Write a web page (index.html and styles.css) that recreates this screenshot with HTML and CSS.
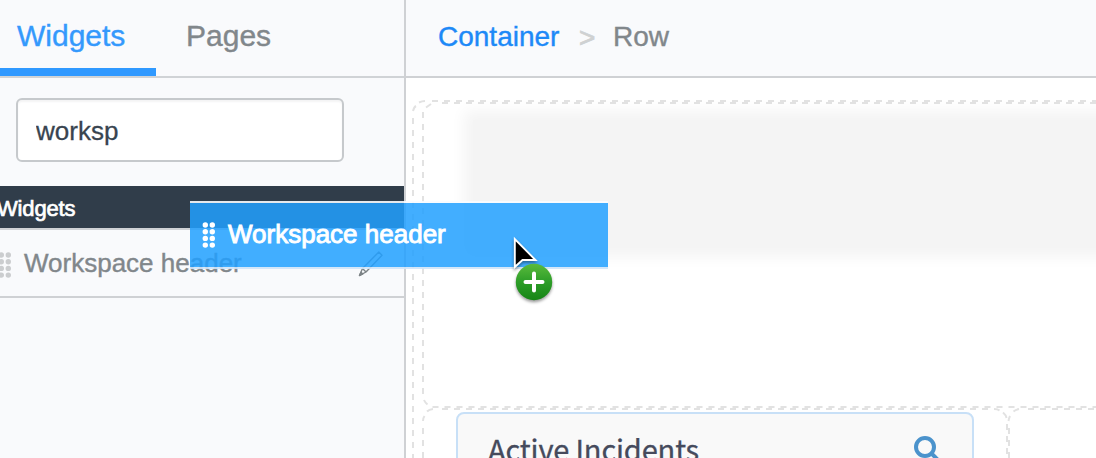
FILE: index.html
```html
<!DOCTYPE html>
<html lang="en">
<head>
<meta charset="utf-8">
<title>Page designer</title>
<link rel="stylesheet" href="styles.css">
</head>
<body>
<div class="app">
  <aside class="sidebar">
    <nav class="tabs">
      <a class="tab tab-active">Widgets</a>
      <a class="tab">Pages</a>
    </nav>
    <div class="search"><input class="search-input" type="text" value="worksp"></div>
    <h2 class="group-title">Widgets</h2>
    <div class="widget-item">
      <svg class="grip" width="14" height="26" viewBox="0 0 14 26"><g fill="currentColor"><circle cx="3.3" cy="3" r="2.7"/><circle cx="10.3" cy="3" r="2.7"/><circle cx="3.3" cy="9.7" r="2.7"/><circle cx="10.3" cy="9.7" r="2.7"/><circle cx="3.3" cy="16.4" r="2.7"/><circle cx="10.3" cy="16.4" r="2.7"/><circle cx="3.3" cy="23.1" r="2.7"/><circle cx="10.3" cy="23.1" r="2.7"/></g></svg>
      <span class="widget-name">Workspace header</span>
      <svg class="pencil" width="26" height="26" viewBox="0 0 26 26" fill="none" stroke="#7d8386" stroke-width="1.4" stroke-linejoin="round"><path d="M1.500 24.500 4.500 17.500 20.800 1 24 4.200 8 21Z"/><path d="M4.500 17.500 8 21"/><path d="M1.500 24.500 3 21.200 4.900 22.900Z" fill="#7d8386"/></svg>
    </div>
  </aside>
  <main class="stage">
    <header class="crumbs">
      <a class="crumb-link">Container</a><span class="crumb-sep">&gt;</span><span class="crumb">Row</span>
    </header>
    <section class="canvas">
      <svg class="outlines" width="690" height="380" viewBox="406 78 690 380" fill="none" stroke="#e2e2e2" stroke-width="2" stroke-dasharray="6 6">
        <path d="M432 101H1096"/><path d="M413 118V458"/><path d="M413 111Q414 107 416 106M419 102.5Q422 101 425 101" stroke-dasharray="none"/>
        <path d="M442 103H1096"/><path d="M423 112V396"/><path d="M426 107.5 431 104M424 400Q425 402.500 427.500 404.500" stroke-dasharray="none"/>
        <path d="M432.500 407H1096"/>
        <path d="M442 409H994"/><path d="M427 411.500Q429 409.500 433 409M423 421Q423 418 424.500 416" stroke-dasharray="none"/>
        <path d="M423 428V458M1007 424V458M1009 428V458"/>
        <path d="M994 409Q998 409 999.500 410.500M1003 412.500Q1006 415 1006.500 418M1008.500 421Q1009 418 1010 416M1013.500 411.500Q1016 409.500 1019 409" stroke-dasharray="none"/>
        <path d="M1028 409H1096"/>
      </svg>
      <div class="drop-row"><div class="drop-target"></div></div>
      <div class="card">
        <h3 class="card-title">Active Incidents</h3>
        <svg class="search-icon" width="30" height="30" viewBox="0 0 30 30" fill="none" stroke="#4b93cc" stroke-width="4"><circle cx="12" cy="12" r="9"/><path d="M18.500 18.500 27 27"/></svg>
      </div>
    </section>
  </main>
</div>
<div class="drag-ghost">
  <svg class="grip" width="14" height="26" viewBox="0 0 14 26"><g fill="currentColor"><circle cx="3.300" cy="3" r="2.700"/><circle cx="10.300" cy="3" r="2.700"/><circle cx="3.300" cy="9.700" r="2.700"/><circle cx="10.300" cy="9.700" r="2.700"/><circle cx="3.300" cy="16.400" r="2.700"/><circle cx="10.300" cy="16.400" r="2.700"/><circle cx="3.300" cy="23.100" r="2.700"/><circle cx="10.300" cy="23.100" r="2.700"/></g></svg>
  <span>Workspace header</span>
</div>
<svg class="cursor" width="52" height="76" viewBox="508 232 52 76">
  <defs><linearGradient id="green" x2="0" y2="1"><stop offset="0" stop-color="#5abb3c"/><stop offset=".5" stop-color="#2d9d28"/><stop offset="1" stop-color="#168515"/></linearGradient></defs>
  <path class="shadow" d="M514.800 239V267L522.500 260H535.500Z" fill="#000" stroke="#fff" stroke-width="1.900"/>
  <circle class="shadow" cx="534" cy="282" r="18.200" fill="url(#green)"/>
  <path d="M525.500 282H542.500M534 273.500V290.500" stroke="#fff" stroke-width="4" stroke-linecap="round"/>
</svg>
</body>
</html>
```

FILE: styles.css
```css
* { box-sizing: border-box; }
body {
  margin: 0;
  overflow: hidden;
  font-family: "Liberation Sans", Arial, sans-serif;
  color: #81878b;
  background: #fff;
}
.app { display: flex; width: 1096px; height: 458px; }
.sidebar {
  width: 406px;
  flex: none;
  overflow: hidden;
  background: #f9fafc;
  border-right: 2px solid #cfd1d4;
}
.tabs { display: flex; height: 78px; border-bottom: 2px solid #d0d3d6; }
.tab {
  height: 76px;
  padding: 19px 0 0 30px;
  font-size: 30px;
  line-height: 34px;
  -webkit-text-stroke: .4px currentColor;
}
.tab-active {
  width: 156px;
  padding-left: 17px;
  color: #3499fc;
  border-bottom: 8px solid #3099ff;
}
.search { padding: 20px 16px 24px; }
.search-input {
  display: block;
  width: 328px;
  height: 64px;
  padding: 3px 18px 0;
  font: 26px "Liberation Sans", Arial, sans-serif;
  color: #38444f;
  -webkit-text-stroke: .3px #38444f;
  background: #fff;
  border: 2px solid #c6c9cc;
  border-radius: 6px;
  box-shadow: inset 0 2px 2px #f4f4f5;
}
.group-title {
  height: 44px;
  margin: 0;
  padding-top: 10px;
  text-indent: -3px;
  font-size: 22px;
  font-weight: 400;
  line-height: 26px;
  letter-spacing: -.15px;
  color: #fff;
  -webkit-text-stroke: .7px #fff;
  background: #303d4a;
  border-bottom: 2px solid #cfd2d5;
}
.widget-item {
  display: flex;
  align-items: center;
  height: 68px;
  border-bottom: 2px solid #cfd1d4;
}
.grip { flex: none; }
.widget-item .grip { margin: 3px 12px 0 -2px; color: #cbcdcf; }
.widget-name { font-size: 26px; white-space: nowrap; -webkit-text-stroke: .4px #81878b; }
.pencil { margin: 2px 20px 0 auto; }
.stage { flex: 1; min-width: 0; }
.crumbs {
  display: flex;
  height: 78px;
  padding: 20px 0 0 32px;
  font-size: 28px;
  line-height: 33px;
  -webkit-text-stroke: .4px currentColor;
  background: #f9fafc;
  border-bottom: 2px solid #cfd1d4;
}
.crumb-link { width: 141px; color: #1d89f7; -webkit-text-stroke-color: #1d89f7; }
.crumb-sep { width: 34px; padding-top: 1px; -webkit-text-stroke: .8px #cfd1d2; color: #cfd1d2; }
.canvas { position: relative; height: 380px; overflow: hidden; }
.outlines { position: absolute; inset: 0; }
.drop-row { height: 334px; padding: 42px 0 0 67px; }
.drop-target {
  width: 760px;
  height: 128px;
  background: #f4f4f4;
  box-shadow: 0 0 14px 9px #f4f4f4;
}
.card {
  display: flex;
  justify-content: space-between;
  width: 518px;
  height: 120px;
  margin-left: 50px;
  padding: 21px 29px 0 30px;
  background: #f9f9f9;
  border: 2px solid #c8e0f7;
  border-radius: 8px;
}
.card-title {
  margin: -3px 0 0;
  font: 400 29px/32px "Noto Sans CJK SC", sans-serif;
  letter-spacing: -.15px;
  color: #454a5c;
  -webkit-text-stroke: .3px #454a5c;
}
.drag-ghost {
  position: absolute;
  left: 190px;
  top: 201px;
  display: flex;
  align-items: center;
  gap: 12px;
  width: 418px;
  height: 68px;
  padding-left: 12px;
  font-size: 26px;
  color: #fff;
  -webkit-text-stroke: .9px #fff;
  background: rgba(33, 160, 255, .85);
  background-clip: padding-box;
  border-top: 2px solid rgba(250, 252, 255, .9);
  border-bottom: 2px solid rgba(207, 228, 248, .9);
}
.drag-ghost span { margin-top: -2px; }
.cursor { position: absolute; left: 508px; top: 232px; }
.shadow { filter: drop-shadow(0 2px 1.5px rgba(0, 0, 0, .4)); }
```
